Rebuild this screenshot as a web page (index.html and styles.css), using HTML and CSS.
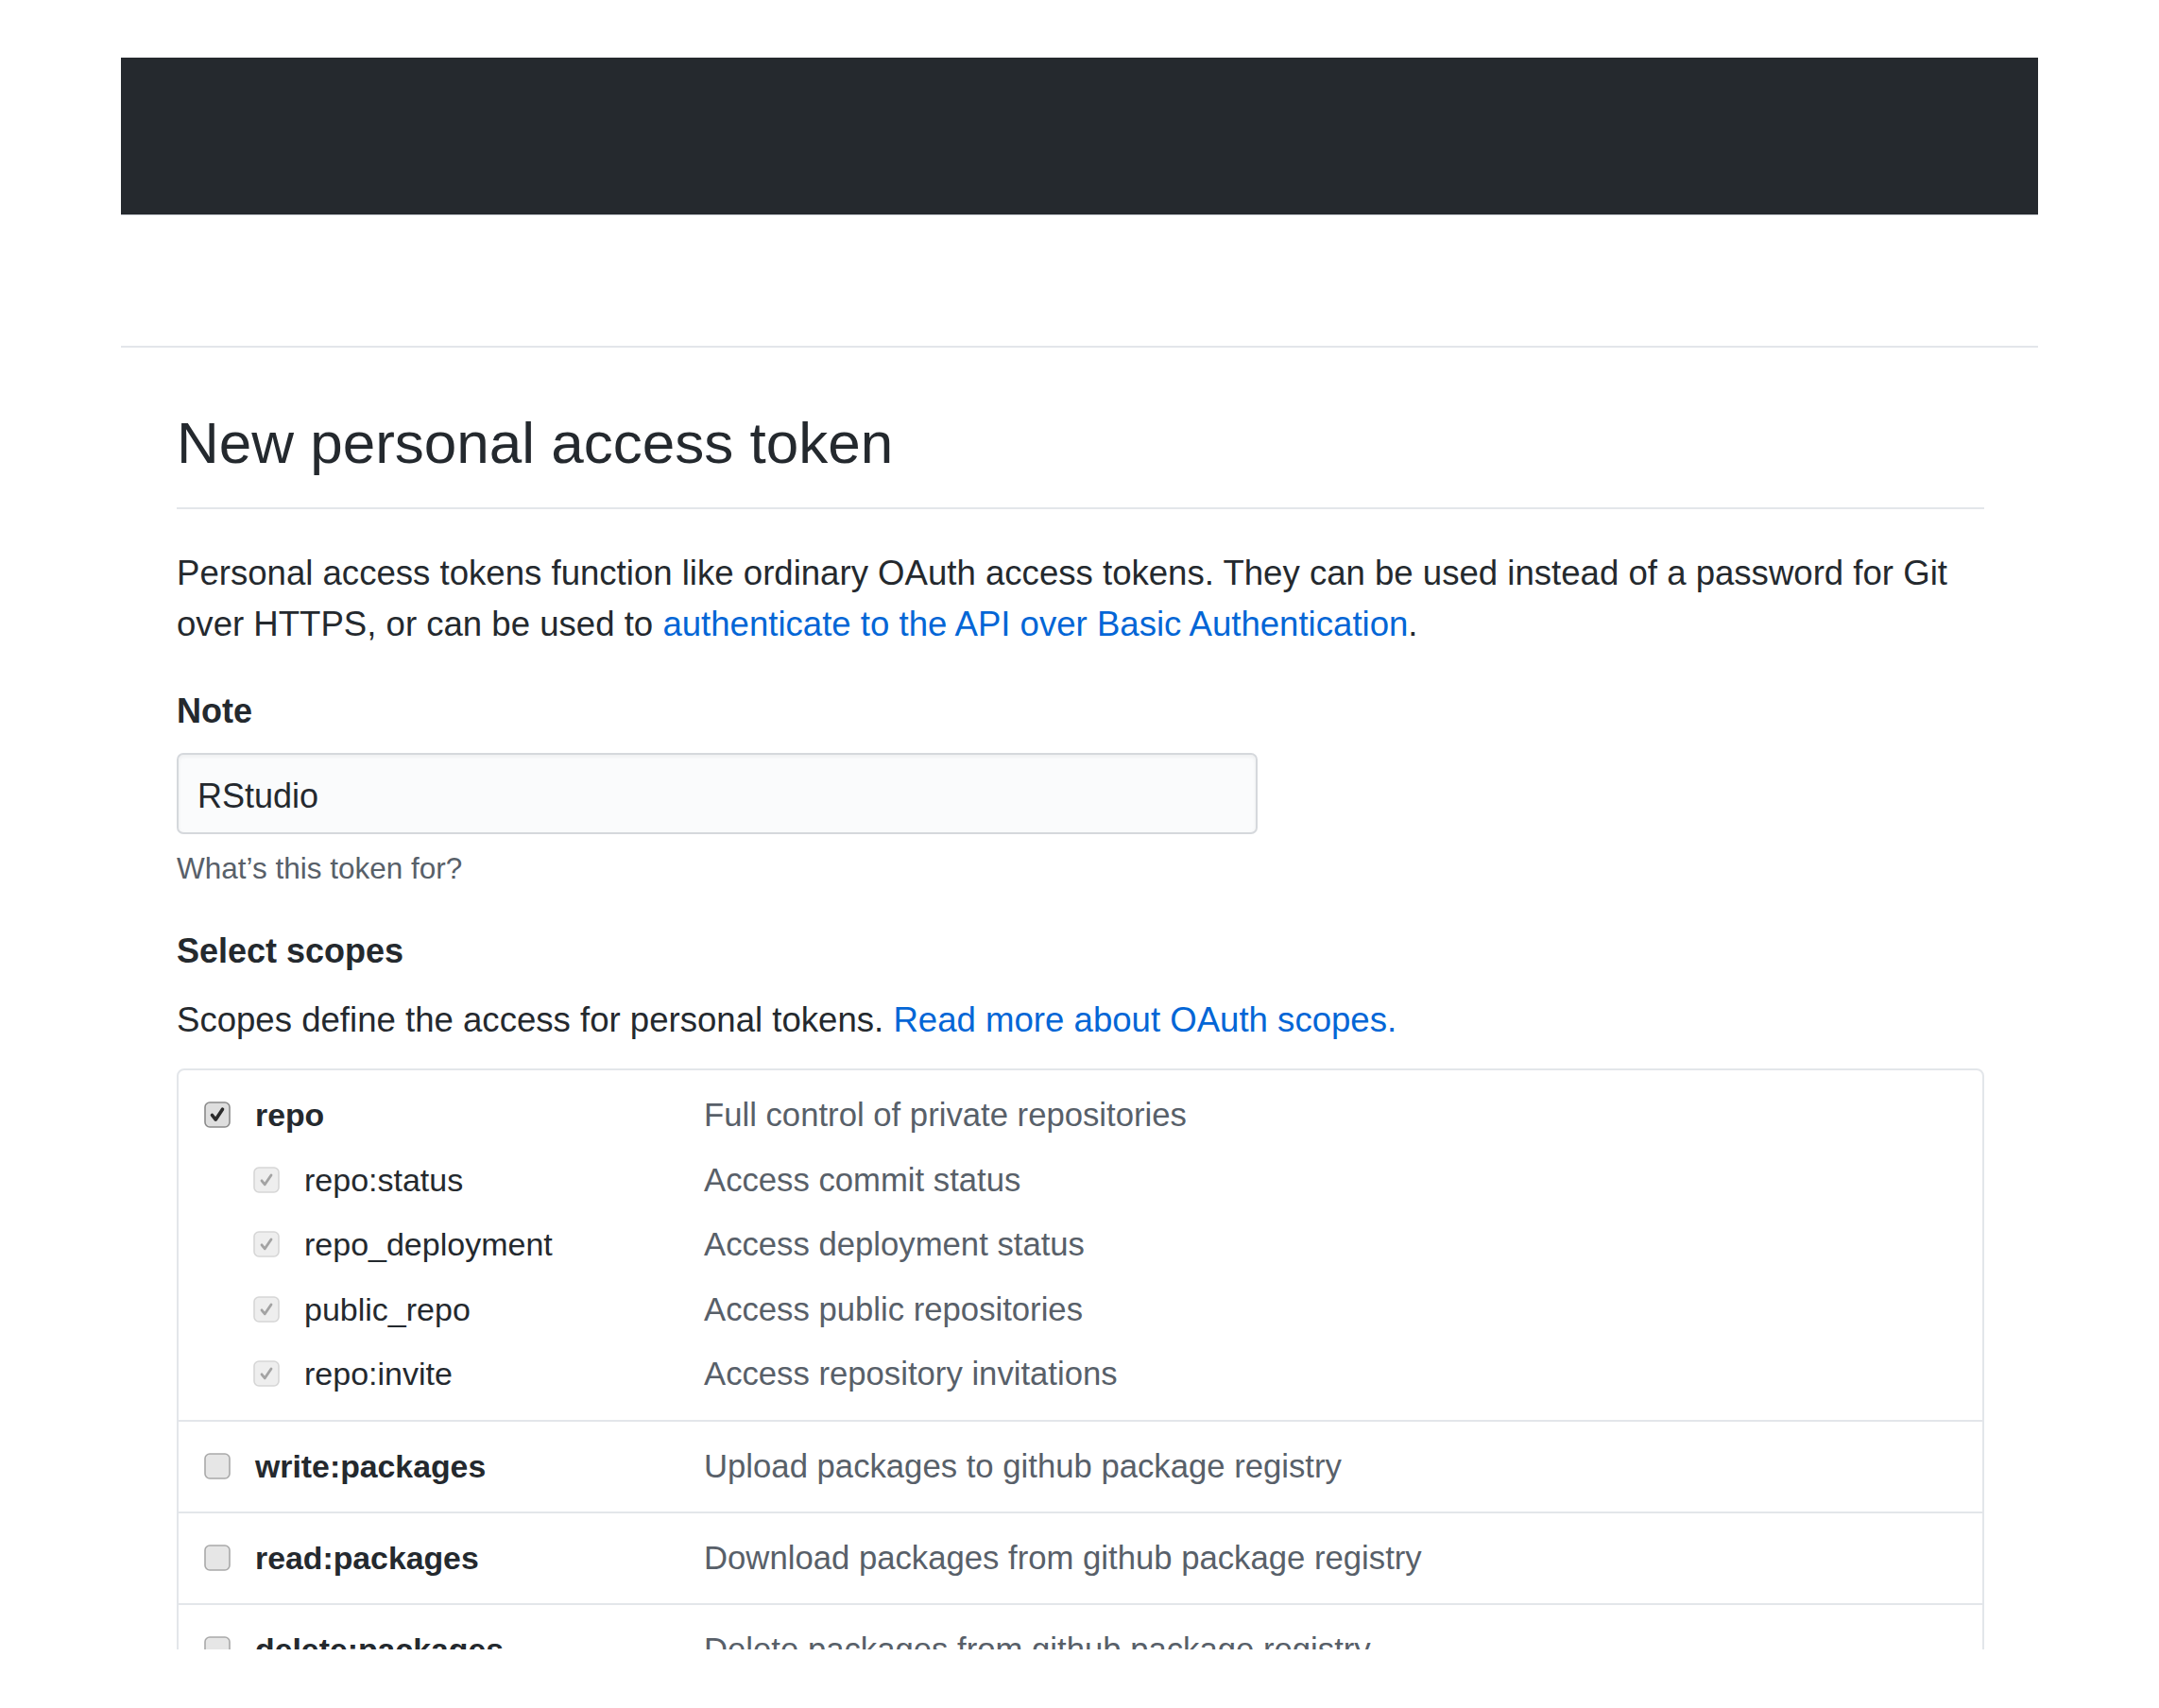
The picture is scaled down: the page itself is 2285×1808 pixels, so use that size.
FILE: index.html
```html
<!DOCTYPE html>
<html lang="en">
<head>
<meta charset="utf-8">
<title>New personal access token</title>
<link rel="stylesheet" href="styles.css">
</head>
<body>
<div class="frame">
  <header class="topbar"></header>
  <div class="subnav"></div>
  <main class="content">
    <h2 class="title">New personal access token</h2>
    <p class="intro">Personal access tokens function like ordinary OAuth access tokens. They can be used instead of a password for Git over HTTPS, or can be used to <a href="#">authenticate to the API over Basic Authentication</a>.</p>

    <form class="token-form">
      <label class="field-label" for="note">Note</label>
      <input class="field-input" id="note" type="text" value="RStudio">
      <p class="field-hint">What’s this token for?</p>

      <h3 class="field-label scopes-title">Select scopes</h3>
      <p class="scopes-intro">Scopes define the access for personal tokens. <a href="#">Read more about OAuth scopes.</a></p>

      <div class="scopes">
        <div class="scope-row">
          <div class="scope-item top">
            <label class="scope-name">
              <svg class="cb" viewBox="0 0 28 28" width="28" height="28"><rect x="1" y="1" width="26" height="26" rx="5" class="cb-checked"/><path d="M8.5 14.5 L12.2 19.2 L19.5 8.2" class="ck-dark"/></svg>
              <span>repo</span>
            </label>
            <span class="scope-desc">Full control of private repositories</span>
          </div>
          <div class="scope-item sub">
            <label class="scope-name">
              <svg class="cb" viewBox="0 0 28 28" width="28" height="28"><rect x="1" y="1" width="26" height="26" rx="5" class="cb-disabled"/><path d="M9 14.8 L12.3 18.8 L19 9" class="ck-light"/></svg>
              <span>repo:status</span>
            </label>
            <span class="scope-desc">Access commit status</span>
          </div>
          <div class="scope-item sub">
            <label class="scope-name">
              <svg class="cb" viewBox="0 0 28 28" width="28" height="28"><rect x="1" y="1" width="26" height="26" rx="5" class="cb-disabled"/><path d="M9 14.8 L12.3 18.8 L19 9" class="ck-light"/></svg>
              <span>repo_deployment</span>
            </label>
            <span class="scope-desc">Access deployment status</span>
          </div>
          <div class="scope-item sub">
            <label class="scope-name">
              <svg class="cb" viewBox="0 0 28 28" width="28" height="28"><rect x="1" y="1" width="26" height="26" rx="5" class="cb-disabled"/><path d="M9 14.8 L12.3 18.8 L19 9" class="ck-light"/></svg>
              <span>public_repo</span>
            </label>
            <span class="scope-desc">Access public repositories</span>
          </div>
          <div class="scope-item sub">
            <label class="scope-name">
              <svg class="cb" viewBox="0 0 28 28" width="28" height="28"><rect x="1" y="1" width="26" height="26" rx="5" class="cb-disabled"/><path d="M9 14.8 L12.3 18.8 L19 9" class="ck-light"/></svg>
              <span>repo:invite</span>
            </label>
            <span class="scope-desc">Access repository invitations</span>
          </div>
        </div>

        <div class="scope-row">
          <div class="scope-item top">
            <label class="scope-name">
              <svg class="cb" viewBox="0 0 28 28" width="28" height="28"><rect x="1" y="1" width="26" height="26" rx="5" class="cb-empty"/></svg>
              <span>write:packages</span>
            </label>
            <span class="scope-desc">Upload packages to github package registry</span>
          </div>
        </div>

        <div class="scope-row">
          <div class="scope-item top">
            <label class="scope-name">
              <svg class="cb" viewBox="0 0 28 28" width="28" height="28"><rect x="1" y="1" width="26" height="26" rx="5" class="cb-empty"/></svg>
              <span>read:packages</span>
            </label>
            <span class="scope-desc">Download packages from github package registry</span>
          </div>
        </div>

        <div class="scope-row">
          <div class="scope-item top">
            <label class="scope-name">
              <svg class="cb" viewBox="0 0 28 28" width="28" height="28"><rect x="1" y="1" width="26" height="26" rx="5" class="cb-empty"/></svg>
              <span>delete:packages</span>
            </label>
            <span class="scope-desc">Delete packages from github package registry</span>
          </div>
        </div>
      </div>
    </form>
  </main>
</div>
</body>
</html>
```

FILE: styles.css
```css
* {
  box-sizing: border-box;
}

html, body {
  margin: 0;
  padding: 0;
  background: #ffffff;
}

body {
  font-family: "Liberation Sans", Arial, Helvetica, sans-serif;
  color: #24292e;
  padding-top: 61px;
}

.frame {
  margin-left: 128px;
  width: 2029px;
  height: 1685px;
  overflow: hidden;
}

.topbar {
  height: 167px;
  background: #25292e;
  border-bottom: 1px solid #cfd3d7;
}

.subnav {
  height: 140px;
  border-bottom: 2px solid #e3e6ea;
}

.content {
  padding: 0 57px 0 59px;
}

.title {
  margin: 62px 0 0 0;
  font-size: 62px;
  line-height: 77.5px;
  font-weight: 400;
  padding-bottom: 29.5px;
  border-bottom: 2px solid #e3e6ea;
  color: #24292e;
}

.intro {
  margin: 41px 0 0 0;
  font-size: 36.6px;
  line-height: 54px;
}

a {
  color: #0366d6;
  text-decoration: none;
}

.token-form {
  margin: 37.5px 0 0 0;
  display: flex;
  flex-direction: column;
  align-items: flex-start;
}

.field-label {
  display: block;
  margin: 0;
  font-size: 36px;
  line-height: 54px;
  font-weight: 700;
}

.field-input {
  margin-top: 17.5px;
  width: 1144px;
  height: 86px;
  padding: 6px 20px 0 20px;
  font-family: "Liberation Sans", Arial, Helvetica, sans-serif;
  font-size: 36px;
  color: #24292e;
  background: #fafbfc;
  border: 2px solid #d5d8dc;
  border-radius: 7px;
  box-shadow: inset 0 2px 4px rgba(27, 31, 35, 0.06);
  outline: none;
}

.field-hint {
  margin: 12.5px 0 0 0;
  font-size: 31.5px;
  line-height: 47px;
  color: #586069;
}

.scopes-title {
  margin-top: 37.5px;
}

.scopes-intro {
  margin: 18.5px 0 0 0;
  font-size: 36.6px;
  line-height: 54px;
}

.scopes {
  margin-top: 24.5px;
  width: 1913px;
  border: 2px solid #e3e6ea;
  border-radius: 8px;
}

.scope-row {
  padding: 22px 0 24px 27px;
}

.scope-row + .scope-row {
  border-top: 2px solid #e3e6ea;
  padding-bottom: 23px;
}

.scope-item {
  display: grid;
  grid-template-columns: 529px 1fr;
  align-items: center;
  height: 50px;
  line-height: 50px;
  font-size: 34.7px;
}

.scope-item.sub {
  margin-top: 18.5px;
}

.scope-name {
  display: flex;
  align-items: center;
  gap: 26px;
  color: #24292e;
  font-size: 34px;
}

.scope-item.top .scope-name span {
  font-weight: 700;
  font-size: 33.8px;
}

.scope-item.sub .scope-name {
  padding-left: 52px;
}

.scope-desc {
  color: #586069;
}

.cb {
  display: block;
  flex: none;
}

.cb-checked {
  fill: #dedede;
  stroke: #8a8a8a;
  stroke-width: 1.6;
}

.cb-disabled {
  fill: #eeeeee;
  stroke: #d6d6d6;
  stroke-width: 1.6;
}

.cb-empty {
  fill: #e6e6e6;
  stroke: #a9a9a9;
  stroke-width: 1.6;
}

.ck-dark {
  fill: none;
  stroke: #2b2b2b;
  stroke-width: 3.6;
  stroke-linecap: round;
  stroke-linejoin: round;
}

.ck-light {
  fill: none;
  stroke: #a3a3a3;
  stroke-width: 2.8;
  stroke-linecap: round;
  stroke-linejoin: round;
}
```
